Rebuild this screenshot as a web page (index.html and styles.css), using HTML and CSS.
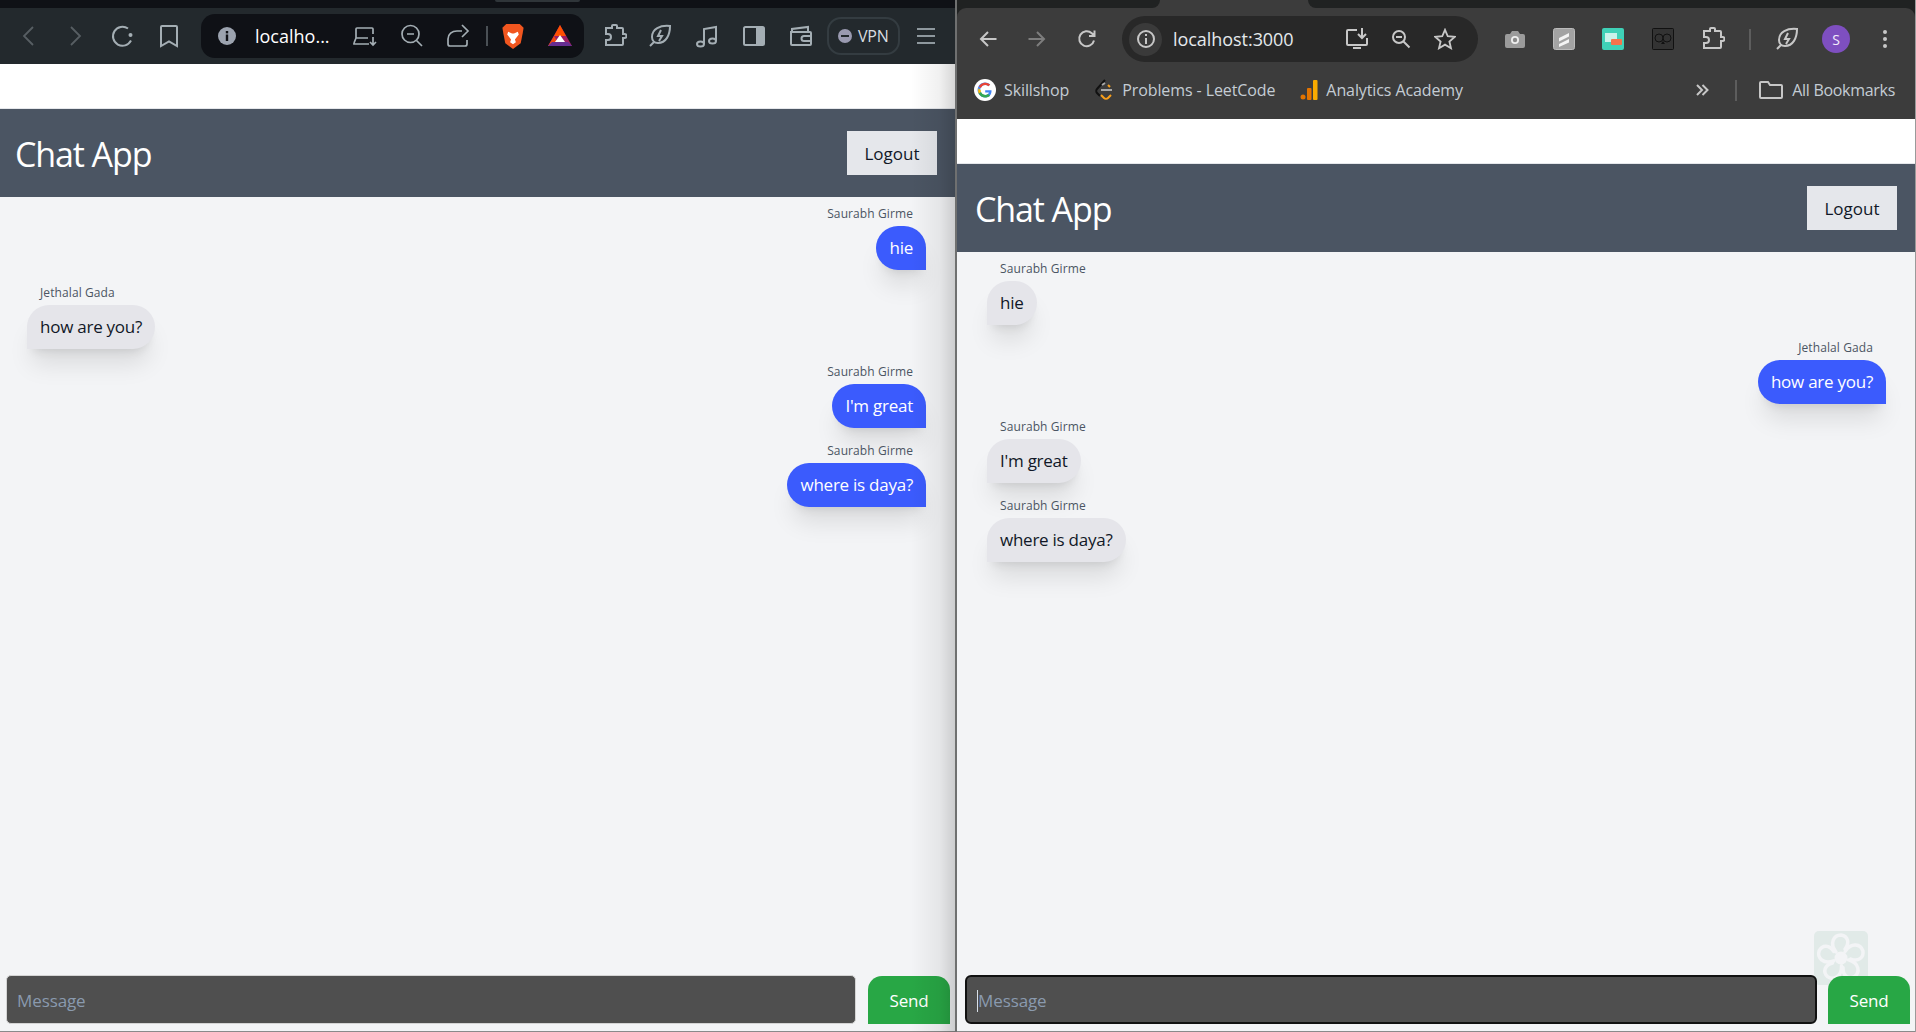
FILE: index.html
```html
<!DOCTYPE html>
<html lang="en">
<head>
<meta charset="utf-8">
<title>Chat App</title>
<link rel="stylesheet" href="styles.css">
</head>
<body>
<div class="desktop">

<section class="win win-left">
  <div class="tabstrip tabstrip-left"><span class="tab-hint"></span></div>
  <div class="toolbar toolbar-left">
    <svg class="ic i20 nav-dim" viewBox="0 0 20 20"><path d="M14 1 5 10l9 9"/></svg>
    <svg class="ic i20 nav-dim gap-fwd" viewBox="0 0 20 20"><path d="m6 1 9 9-9 9"/></svg>
    <svg class="ic i24 nav-on gap-reload" viewBox="0 0 24 24"><path d="M21 16.500A9.500 9.500 0 1 1 18 4.500"/><circle cx="20.500" cy="11" r="2" class="fill-nav"/></svg>
    <svg class="ic i24 nav-on gap-mark" viewBox="0 0 24 24"><path d="M5 2h14a1 1 0 0 1 1 1v19l-8-4.500L4 22V3a1 1 0 0 1 1-1z"/></svg>
    <div class="urlbar urlbar-left">
      <svg class="i20" viewBox="0 0 20 20"><circle cx="10" cy="10" r="9" fill="#9ca3af"/><rect x="8.800" y="8.500" width="2.400" height="6.500" fill="#0f1116"/><rect x="8.800" y="5" width="2.400" height="2.400" fill="#0f1116"/></svg>
      <span class="urltext-left">localho...</span>
      <svg class="ic i24 bar-ic gap-a" viewBox="0 0 24 24"><path d="M3 14V5a1 1 0 0 1 1-1h15a1 1 0 0 1 1 1v5M1 19l2-5h12M1 19v1h15M20 13v8m-3-3 3 3 3-3"/></svg>
      <svg class="ic i24 bar-ic gap-b" viewBox="0 0 24 24"><circle cx="10.500" cy="10" r="8.500"/><path d="M7 10h7M16.500 16.500l5.500 5.500"/></svg>
      <svg class="ic i24 bar-ic gap-c" viewBox="0 0 24 24"><path d="M2 20v-5c0-5 4-8 9-8h5M16 1l6 6-6 6M2 20a2 2 0 0 0 2 2h15a2 2 0 0 0 2-2v-4"/></svg>
      <span class="bar-sep"></span>
      <svg class="brave" viewBox="0 0 24 28"><path d="M5 1h14l4 4-1 6-2 10-8 6-8-6L2 11 1 5z" fill="#f1561f"/><path d="M7 9l4 2h2l4-2 1 3-4 5 1 3-3 2-3-2 1-3-4-5z" fill="#fff"/></svg>
      <svg class="bat" viewBox="0 0 26 24"><path d="M13 1 25 22H1z" fill="#9e1f63"/><path d="M13 1 7 12h12z" fill="#ff5000"/><path d="M1 22l6-10 6 10z" fill="#ff5000" opacity=".85"/><path d="M1 22h24l-4-4H5z" fill="#662d91"/><path d="m13 11 5 7H8z" fill="#fff"/></svg>
    </div>
    <svg class="ic i24 tool-ic gap-ext" viewBox="0 0 24 24"><path d="M3 4h6V2a1 1 0 0 1 1-1h3a1 1 0 0 1 1 1v2h5a1 1 0 0 1 1 1v5h1.500a1.500 1.500 0 0 1 0 4H20v6a1 1 0 0 1-1 1H3v-5h2a3 3 0 0 0 0-6H3z"/></svg>
    <svg class="ic i24 tool-ic gap-leaf" viewBox="0 0 24 24"><path d="M22 2C12 1 4 5 4 13c0 3 2 6 6 6 8 0 12-8 12-17zM2 22l4-4M13 6l-3 6h4l-3 5"/></svg>
    <svg class="ic i24 tool-ic gap-tool" viewBox="0 0 24 24"><path d="M9 20V5l12-2v14"/><ellipse cx="5.500" cy="20" rx="3.500" ry="2.600"/><ellipse cx="17.500" cy="17" rx="3.500" ry="2.600"/></svg>
    <svg class="ic i24 tool-ic gap-tool" viewBox="0 0 24 24"><rect x="2" y="3" width="20" height="18" rx="1.500"/><rect x="14" y="3" width="8" height="18" class="fill-tool"/></svg>
    <svg class="ic i24 tool-ic gap-tool" viewBox="0 0 24 24"><path d="M3 8V5l16-2v5M2 8h19a1 1 0 0 1 1 1v11a1 1 0 0 1-1 1H3a1 1 0 0 1-1-1zM22 12h-7a2 2 0 0 0 0 5h7"/></svg>
    <div class="vpn">
      <span class="vpn-dot"></span>
      <span>VPN</span>
    </div>
    <svg class="ic i20 menu-left" viewBox="0 0 20 20"><path d="M1 3h18M1 10h18M1 17h18"/></svg>
  </div>
  <div class="page page-left">
    <div class="page-gap"></div>
    <header class="appbar appbar-left">
      <h1 class="title">Chat App</h1>
      <button class="logout">Logout</button>
    </header>
    <main class="chat chat-left">
      <div class="msg mine"><div class="name">Saurabh Girme</div><div class="bubble blue">hie</div></div>
      <div class="msg other"><div class="name">Jethalal Gada</div><div class="bubble gray">how are you?</div></div>
      <div class="msg mine"><div class="name">Saurabh Girme</div><div class="bubble blue">I'm great</div></div>
      <div class="msg mine"><div class="name">Saurabh Girme</div><div class="bubble blue">where is daya?</div></div>
    </main>
    <footer class="composer composer-left">
      <div class="input"><span class="ph">Message</span></div>
      <button class="send">Send</button>
    </footer>
    <div class="edge-shade"></div>
  </div>
</section>

<div class="divider"></div>

<section class="win win-right">
  <div class="tabstrip tabstrip-right"><span class="tab-rest tab-rest-a"></span><span class="tab-rest tab-rest-b"></span></div>
  <div class="chrome-top">
    <div class="toolbar toolbar-right">
      <svg class="ic i20 cr-on" viewBox="0 0 20 20"><path d="M18.500 10H3M10 3l-7 7 7 7"/></svg>
      <svg class="ic i20 cr-dim gap-cf" viewBox="0 0 20 20"><path d="M1.500 10H17M10 3l7 7-7 7"/></svg>
      <svg class="ic i20 cr-on gap-cr" viewBox="0 0 20 20"><path d="M17 11.500A7.500 7.500 0 1 1 14.800 4.200L17 6.500M17.500 1.500v5.500H12"/></svg>
      <div class="urlbar urlbar-right">
        <span class="info-round"><svg class="ic i20 cr-on" viewBox="0 0 20 20"><circle cx="10" cy="10" r="8"/><path d="M10 9v6M10 5v2"/></svg></span>
        <span class="urltext-right">localhost:3000</span>
        <svg class="ic i24 cr-on gap-c1" viewBox="0 0 24 24"><path d="M12 3H3a1 1 0 0 0-1 1v13a1 1 0 0 0 1 1h18a1 1 0 0 0 1-1v-6M8 21h8M17 1v10m-4-4 4 4 4-4"/></svg>
        <svg class="ic i20 cr-on gap-c2" viewBox="0 0 20 20"><circle cx="8" cy="8" r="6"/><path d="M5 8h6M12.500 12.500l6 6"/></svg>
        <svg class="ic star cr-on gap-c3" viewBox="0 0 24 24"><path d="m12 2 3 7 7.500.7-5.700 5 1.700 7.300-6.500-3.900L5.500 22l1.700-7.300-5.700-5L9 9z"/></svg>
      </div>
      <svg class="cam" viewBox="0 0 22 20"><path d="M1 7a2 2 0 0 1 2-2h3l2-3h6l2 3h3a2 2 0 0 1 2 2v10a2 2 0 0 1-2 2H3a2 2 0 0 1-2-2z" fill="#9b9b9b"/><circle cx="11" cy="11" r="4" fill="#eee"/><circle cx="11" cy="11" r="2.200" fill="#8a8a8a"/></svg>
      <svg class="tile tile-a" viewBox="0 0 22 22"><rect x=".500" y=".500" width="21" height="21" rx="2" fill="#a3a3a3" stroke="#bbb"/><path d="M6 10l10-5v3.500L6 13.500zM6 16l10-5v3.500L6 19z" fill="#f4f4f4"/></svg>
      <svg class="tile tile-b" viewBox="0 0 22 22"><rect width="22" height="22" rx="2" fill="#3fd1b7"/><rect x="3" y="5" width="12" height="9" fill="#c9f2ea"/><rect x="9" y="11" width="11" height="6" rx="1" fill="#f5734d"/></svg>
      <svg class="tile tile-c" viewBox="0 0 22 22"><rect x=".500" y=".500" width="21" height="21" rx="1" fill="#333" stroke="#111"/><circle cx="7" cy="10" r="4" fill="none" stroke="#111"/><circle cx="15" cy="10" r="4" fill="none" stroke="#111"/><path d="m11 13-2 3h4z" fill="#111"/></svg>
      <svg class="ic i24 cr-on gap-ce" viewBox="0 0 24 24"><path d="M3 4h6V2a1 1 0 0 1 1-1h3a1 1 0 0 1 1 1v2h5a1 1 0 0 1 1 1v5h1.500a1.500 1.500 0 0 1 0 4H20v6a1 1 0 0 1-1 1H3v-5h2a3 3 0 0 0 0-6H3z"/></svg>
      <span class="cr-sep"></span>
      <svg class="ic i24 cr-on gap-cl" viewBox="0 0 24 24"><path d="M22 2C12 1 4 5 4 13c0 3 2 6 6 6 8 0 12-8 12-17zM2 22l4-4M13 6l-3 6h4l-3 5"/></svg>
      <span class="avatar">S</span>
      <svg class="dots" viewBox="0 0 6 20"><circle cx="3" cy="3" r="2"/><circle cx="3" cy="10" r="2"/><circle cx="3" cy="17" r="2"/></svg>
    </div>
    <div class="bookmarks">
      <svg class="fav" viewBox="0 0 22 22"><circle cx="11" cy="11" r="11" fill="#fff"/><path d="M17.500 11.200h-6.300v2.400h3.700c-.4 1.600-1.800 2.500-3.700 2.500a5 5 0 0 1 0-10c1.300 0 2.400.4 3.200 1.200l1.800-1.800A7.500 7.500 0 1 0 11.200 18.500c4.200 0 6.700-3 6.300-7.300z" fill="#4285f4"/><path d="M4.800 7.500 7 9.100a4.700 4.700 0 0 1 4.200-3c1.300 0 2.400.4 3.200 1.200l1.800-1.800a7.500 7.500 0 0 0-11.400 2z" fill="#ea4335"/><path d="M4.700 14.800 7 13a5 5 0 0 1-.3-2L4.500 9.300a7.500 7.500 0 0 0 .2 5.500z" fill="#fbbc05"/><path d="M11.200 18.500c2 0 3.700-.7 4.900-1.800L14 15c-.7.700-1.700 1.100-2.800 1.100A5 5 0 0 1 7 13l-2.300 1.800a7.500 7.500 0 0 0 6.500 3.700z" fill="#34a853"/></svg>
      <span class="bm-text">Skillshop</span>
      <svg class="fav fav-lc" viewBox="0 0 20 22"><path d="M11 1 3 10c-1 1-1 3 0 4l3 3" fill="none" stroke="#111" stroke-width="2"/><path d="M8 6l3-2M7 11h11" stroke="#a8a8a8" stroke-width="2"/><path d="m7 16 3 3c1 1 3 1 4 0l3-3M14 6l2 2" fill="none" stroke="#f89f1b" stroke-width="2"/></svg>
      <span class="bm-text">Problems - LeetCode</span>
      <svg class="fav fav-ga" viewBox="0 0 18 22"><circle cx="3" cy="18" r="2.500" fill="#e37400"/><rect x="7" y="9" width="4.500" height="12" rx="1" fill="#e37400"/><rect x="13" y="1" width="4.500" height="20" rx="1" fill="#f9ab00"/></svg>
      <span class="bm-text">Analytics Academy</span>
      <svg class="ic more" viewBox="0 0 14 12"><path d="m2 1 5 5-5 5M7.500 1l5 5-5 5"/></svg>
      <span class="bm-sep"></span>
      <svg class="ic folder" viewBox="0 0 24 18"><path d="M1 2a1 1 0 0 1 1-1h7l2 3h11a1 1 0 0 1 1 1v11a1 1 0 0 1-1 1H2a1 1 0 0 1-1-1z"/></svg>
      <span class="bm-text bm-all">All Bookmarks</span>
    </div>
  </div>
  <div class="page page-right">
    <div class="page-gap"></div>
    <header class="appbar appbar-right">
      <h1 class="title">Chat App</h1>
      <button class="logout">Logout</button>
    </header>
    <main class="chat chat-right">
      <div class="msg other"><div class="name">Saurabh Girme</div><div class="bubble gray">hie</div></div>
      <div class="msg mine"><div class="name">Jethalal Gada</div><div class="bubble blue">how are you?</div></div>
      <div class="msg other"><div class="name">Saurabh Girme</div><div class="bubble gray">I'm great</div></div>
      <div class="msg other"><div class="name">Saurabh Girme</div><div class="bubble gray">where is daya?</div></div>
    </main>
    <svg class="watermark" viewBox="0 0 54 54"><rect width="54" height="54" rx="5" fill="#d9e6e3" opacity=".7"/><g fill="none" stroke="#f3f4f6" stroke-width="3.500" stroke-linecap="round"><path d="M22 21C15 12 20 4 27 4c7 1 9 8 4 14"/><path d="M22 21C15 12 20 4 27 4c7 1 9 8 4 14" transform="rotate(72 27 27)"/><path d="M22 21C15 12 20 4 27 4c7 1 9 8 4 14" transform="rotate(144 27 27)"/><path d="M22 21C15 12 20 4 27 4c7 1 9 8 4 14" transform="rotate(216 27 27)"/><path d="M22 21C15 12 20 4 27 4c7 1 9 8 4 14" transform="rotate(288 27 27)"/></g><circle cx="27" cy="27" r="6.500" fill="#f3f4f6"/></svg>
    <footer class="composer composer-right">
      <div class="input input-focus"><span class="caret"></span><span class="ph">Message</span></div>
      <button class="send">Send</button>
    </footer>
  </div>
</section>

</div>
</body>
</html>
```

FILE: styles.css
```css
* { box-sizing: border-box; }
html, body { margin: 0; padding: 0; height: 100%; overflow: hidden; }
body { font-family: "Open Sans", "Noto Sans", "Liberation Sans", sans-serif; background: #6b6b6b; }
.desktop { display: flex; width: 1916px; height: 1032px; }
.win { display: flex; flex-direction: column; height: 1032px; min-width: 0; }
.win-left { width: 955px; }
.divider { width: 2px; background: #6f7070; }
.win-right { width: 958px; background: #202222; }
.desktop::after { content: ""; width: 1px; background: #9a9a9a; }

.ic { fill: none; stroke-width: 1.8; flex: none; }
.i20 { width: 20px; height: 20px; flex: none; }
.i24 { width: 24px; height: 24px; flex: none; }

.tabstrip { height: 8px; flex: none; display: flex; }
.tabstrip-left { background: #0f1116; padding-left: 495px; }
.tab-hint { width: 85px; height: 2px; background: #2f3539; border-radius: 0 0 6px 6px; }
.tabstrip-right { background: #3c3c3c; justify-content: space-between; }
.tab-rest { background: #202222; height: 8px; display: block; }
.tab-rest-a { width: 203px; border-radius: 0 0 8px 0; }
.tab-rest-b { width: 607px; border-radius: 0 0 0 8px; }

.toolbar { display: flex; align-items: center; flex: none; }
.toolbar-left { height: 56px; background: #23292d; padding-left: 19px; }
.nav-dim { stroke: #575e63; }
.nav-on { stroke: #a4aeb4; stroke-width: 2; }
.fill-nav { fill: #a4aeb4; stroke: none; }
.gap-fwd { margin-left: 26px; }
.gap-reload { margin-left: 25px; }
.gap-mark { margin-left: 23px; }
.urlbar { display: flex; align-items: center; flex: none; }
.urlbar-left { width: 383px; height: 44px; margin-left: 20px; background: #0f1116; border-radius: 14px; padding-left: 16px; }
.urltext-left { color: #fff; font-size: 18px; margin-left: 18px; width: 77px; white-space: nowrap; letter-spacing: 0; }
.bar-ic { stroke: #a4aeb4; stroke-width: 1.7; }
.gap-a { margin-left: 21px; }
.gap-b { margin-left: 23px; }
.gap-c { margin-left: 22px; }
.bar-sep { width: 2px; height: 20px; background: #4a5055; margin-left: 16px; flex: none; }
.brave { width: 24px; height: 27px; margin-left: 13px; flex: none; }
.bat { width: 26px; height: 24px; margin-left: 22px; flex: none; }
.tool-ic { stroke: #a4aeb4; stroke-width: 2; }
.fill-tool { fill: #a4aeb4; stroke: none; }
.gap-ext { margin-left: 19px; }
.gap-leaf { margin-left: 21px; }
.gap-tool { margin-left: 23px; }
.vpn { display: flex; align-items: center; gap: 6px; width: 73px; height: 38px; margin-left: 14px; border: 2px solid #343c41; border-radius: 14px; color: #d8dce0; font-size: 16px; padding-left: 9px; letter-spacing: -.2px; flex: none; }
.vpn-dot { width: 14px; height: 14px; border-radius: 50%; background: #9a9ab0; position: relative; flex: none; }
.vpn-dot::after { content: ""; position: absolute; left: 3px; right: 3px; top: 6px; height: 2px; background: #23292d; }
.menu-left { stroke: #8e989e; margin-left: 16px; }

.page { flex: 1; display: flex; flex-direction: column; background: #f3f4f6; position: relative; min-height: 0; }
.page-gap { height: 45px; background: #fff; border-bottom: 1px solid #e5e7eb; flex: none; }
.appbar { height: 88px; flex: none; background: #4b5563; display: flex; align-items: center; justify-content: space-between; }
.appbar-left { padding: 0 18px 0 15px; }
.appbar-right { padding: 0 18px 0 18px; }
.title { margin: 0; padding-top: 2px; color: #fff; font-weight: 400; font-size: 34px; letter-spacing: -1.1px; }
.logout { width: 90px; height: 44px; border: 0; background: #e5e7eb; color: #111827; font: 400 17px "Open Sans", sans-serif; letter-spacing: 0; padding: 0; }

.chat { flex: 1; min-height: 0; display: flex; flex-direction: column; gap: 15px; padding-top: 9px; }
.chat-left { padding-left: 27px; padding-right: 29px; }
.chat-right { padding-left: 30px; padding-right: 29px; }
.msg { display: flex; flex-direction: column; height: 64px; }
.mine { align-items: flex-end; }
.other { align-items: flex-start; }
.name { font-size: 12px; line-height: 16px; color: #4b5563; padding: 0 13px; letter-spacing: .1px; height: 20px; }
.bubble { height: 44px; padding: 0 13px; font-size: 17px; line-height: 44px; border-radius: 22px; letter-spacing: -.25px; box-shadow: 0 20px 25px -5px rgba(0,0,0,.1), 0 8px 10px -6px rgba(0,0,0,.1); white-space: nowrap; }
.blue { background: #3b5bfd; color: #fff; border-bottom-right-radius: 0; }
.gray { background: #e5e5ea; color: #111827; border-bottom-left-radius: 0; }

.composer { flex: none; display: flex; align-items: stretch; height: 57px; border-bottom: 1px solid #8a8a8a; position: relative; }
.composer-left { padding: 0 5px 7px 6px; gap: 12px; }
.composer-right { padding: 0 5px 7px 8px; gap: 11px; }
.input { flex: 1; background: #4f4f4f; border: 1px solid #d4d4d4; border-radius: 5px; display: flex; align-items: center; padding: 2px 0 0 10px; }
.ph { color: #8a9aae; font-size: 17px; letter-spacing: -.1px; }
.send { width: 82px; margin-top: 1px; border: 0; background: #28a745; color: #fff; font: 400 17px "Open Sans", sans-serif; letter-spacing: -.2px; border-radius: 14px 14px 0 0; padding: 0; }
.input-focus { border: 2px solid #111; border-radius: 6px; }
.caret { width: 1px; height: 22px; background: #d8e0ea; flex: none; }
.edge-shade { position: absolute; top: 0; right: 0; bottom: 0; width: 44px; background: linear-gradient(to right, rgba(0,0,0,0), rgba(0,0,0,.06) 65%, rgba(0,0,0,.16)); pointer-events: none; }
.watermark { position: absolute; right: 47px; bottom: 47px; width: 54px; height: 54px; }

.chrome-top { height: 111px; flex: none; background: #3c3c3c; border-radius: 9px 9px 0 0; display: flex; flex-direction: column; }
.toolbar-right { height: 53px; padding-left: 21px; }
.toolbar-right > svg, .toolbar-right > span, .toolbar-right > .urlbar { margin-top: 9px; }
.cr-on { stroke: #c7c7c7; stroke-width: 2; }
.cr-dim { stroke: #7d7d7d; stroke-width: 2; }
.gap-cf { margin-left: 29px; }
.gap-cr { margin-left: 30px; }
.urlbar-right { width: 356px; height: 46px; margin-left: 25px; border-radius: 23px; background: #282828; padding-left: 7px; }
.info-round { width: 33px; height: 33px; border-radius: 50%; background: #3a3a3a; display: flex; align-items: center; justify-content: center; flex: none; }
.urltext-right { color: #e4e8ec; font-size: 18px; margin-left: 11px; width: 122px; white-space: nowrap; letter-spacing: -.05px; }
.gap-c1 { margin-left: 50px; }
.gap-c2 { margin-left: 22px; }
.star { width: 22px; height: 22px; }
.gap-c3 { margin-left: 23px; }
.cam { width: 22px; height: 20px; margin-left: 26px; flex: none; }
.tile { width: 22px; height: 22px; flex: none; }
.tile-a, .tile-b { margin-left: 27px; }
.tile-c { margin-left: 28px; }
.gap-ce { margin-left: 27px; }
.cr-sep { width: 2px; height: 21px; background: #5d5d5d; margin-left: 24px; flex: none; }
.gap-cl { margin-left: 24px; }
.avatar { width: 28px; height: 28px; border-radius: 50%; background: #7e4fc0; color: #f3ecfb; font: 400 14px "Open Sans", sans-serif; display: flex; align-items: center; justify-content: center; margin-left: 23px; flex: none; }
.dots { width: 6px; height: 20px; margin-left: 32px; fill: #c7c7c7; flex: none; }

.bookmarks { height: 58px; display: flex; align-items: center; padding-left: 17px; color: #c4ccd4; font-size: 16px; }
.fav { width: 22px; height: 22px; flex: none; }
.bm-text { margin-left: 8px; letter-spacing: -.1px; white-space: nowrap; }
.fav-lc { width: 20px; margin-left: 25px; }
.fav-ga { width: 18px; margin-left: 25px; }
.more { width: 14px; height: 12px; stroke: #c7c7c7; stroke-width: 2; margin-left: auto; }
.bm-sep { width: 2px; height: 21px; background: #5d5d5d; margin-left: 26px; flex: none; }
.folder { width: 24px; height: 18px; stroke: #c7c7c7; stroke-width: 2; margin-left: 22px; }
.bm-all { margin-left: 9px; margin-right: 20px; letter-spacing: -.3px; }
```
